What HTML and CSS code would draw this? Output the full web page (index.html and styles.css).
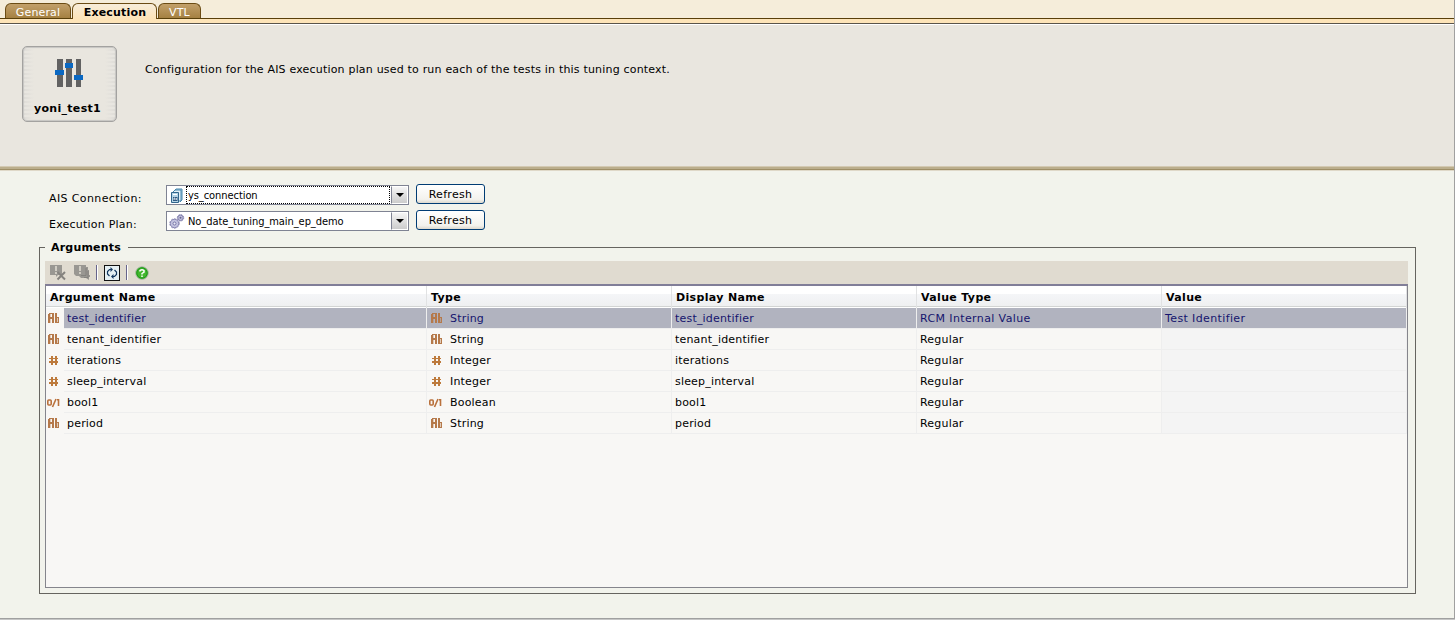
FILE: index.html
```html
<!DOCTYPE html>
<html lang="en">
<head>
<meta charset="utf-8">
<title>yoni_test1</title>
<link rel="stylesheet" href="styles.css">
</head>
<body>
<svg class="defs" width="0" height="0">
  <defs>
    <symbol id="ab" viewBox="0 0 12 11"><g shape-rendering="crispEdges" fill="#b5794a"><path d="M1 0H5V1H1ZM0 1H2V10H0ZM4 0H6V10H4ZM2 4H4V6H2ZM7 0H9V10H7ZM9 4H11V5H9ZM10 4H11V10H10ZM9 9H11V10H9Z"/><path d="M2 1H3V10H2ZM9 5H10V9H9Z" opacity=".35"/></g></symbol>
    <symbol id="num" viewBox="0 0 12 11"><path d="M3 1H5V10H3ZM7 1H9V10H7ZM1 3H10V4H1ZM1 6H10V8H1Z" shape-rendering="crispEdges" fill="#bd7a3c"/></symbol>
    <symbol id="bool" viewBox="0 0 13 11"><path d="M1.700 3H3.300Q4.200 3 4.200 4V7Q4.200 8 3.300 8H1.700Q.8 8 .8 7V4Q.8 3 1.700 3ZM5.500 10L9 2M10 2.800H11.500V9" fill="none" stroke="#b9713c" stroke-width="1.600"/></symbol>
  </defs>
</svg>
<div class="window">
  <nav class="tabs"><a class="tab general">General</a><a class="tab active">Execution</a><a class="tab vtl">VTL</a></nav>
  <div class="tab-strip"></div>
  <header class="banner">
    <div class="tile">
      <svg width="30" height="30" viewBox="0 0 30 30" shape-rendering="crispEdges"><path d="M3 1h6v28H3zM12 1h6v28h-6zM22 1h5v28h-5z" fill="#626262"/><path d="M1 12h9v5H1zM11 5h8v5h-8zM20 17h9v5h-9z" fill="#0a68c2"/></svg>
      <b>yoni_test1</b>
    </div>
    <p>Configuration for the AIS execution plan used to run each of the tests in this tuning context.</p>
  </header>
  <div class="divider"></div>
  <main>
    <div class="field">
      <label>AIS Connection:</label>
      <div class="combo">
        <svg width="16" height="16" viewBox="0 0 16 16"><path d="M5 3L7 1H13V12L11 14" fill="#c3dcea" stroke="#4787ad"/><path d="M4 4L6 2H12V13H10" fill="#e3f1f7" stroke="#4787ad"/><path d="M2.500 4.500H9.500V14.500H2.500Z" fill="#b5d5e7" stroke="#31668c"/><path d="M4 6.500H8" stroke="#fff"/><path d="M4 9H8.500V13H4Z" fill="#315a82"/><path d="M5 12V10H6V12M7.500 10V12" fill="none" stroke="#fff" stroke-width=".7"/></svg>
        <span class="value focused">ys_connection</span><span class="arrow"></span>
      </div>
      <button>Refresh</button>
    </div>
    <div class="field">
      <label class="plan">Execution Plan:</label>
      <div class="combo">
        <svg width="16" height="16" viewBox="0 0 16 16"><circle cx="5.500" cy="9.500" r="4.200" fill="#c3c3e0" stroke="#8b89b5" stroke-width="1"/><circle cx="5.500" cy="9.500" r="4.700" fill="none" stroke="#8b89b5" stroke-width="1" stroke-dasharray="1.800 1.200"/><circle cx="5.500" cy="9.500" r="1.500" fill="#ececf7" stroke="#7776a5"/><circle cx="11.500" cy="3.800" r="2.700" fill="#c3c2df" stroke="#8280ad"/><circle cx="11.500" cy="3.800" r="3.200" fill="none" stroke="#8280ad" stroke-dasharray="1.500 1"/><circle cx="11.500" cy="3.800" r="1" fill="#66648f"/></svg>
        <span class="value">No_date_tuning_main_ep_demo</span><span class="arrow"></span>
      </div>
      <button>Refresh</button>
    </div>
    <section class="group">
      <h2>Arguments</h2>
      <div class="toolbar">
        <svg width="18" height="18" viewBox="0 0 18 18"><path d="M1 1H13V11H9L7 13V11H1Z" fill="#999792"/><path d="M7 2V7M7 8V10" stroke="#dedad0" stroke-width="1.600"/><path d="M8.500 8L16 15.500M16 8L8.500 15.500" stroke="#85837f" stroke-width="2"/></svg>
        <svg class="second" width="18" height="18" viewBox="0 0 18 18"><path d="M1 1H13V3H15V6H16V11H17V13H16V16L13 14H8L6 12H3L1 10Z" fill="#999792"/><path d="M7 2V7M7 8V10" stroke="#dedad0" stroke-width="1.600"/><path d="M13 4V11.500H8M15 7V13.500H11" fill="none" stroke="#7e7c79" stroke-width=".8"/></svg>
        <span class="sep"></span>
        <svg class="reload" width="16" height="16" viewBox="0 0 16 16"><rect x=".5" y=".5" width="15" height="15" fill="#e5f0f4" stroke="#111"/><path d="M7 4.500H5.500L3.500 6.500V9L5.500 11M9 11.500H10.500L12.500 9.500V7L10.500 5" fill="none" stroke="#12365e" stroke-width="1.200"/><path d="M6.500 2L9 4.500L6.500 7ZM9.500 9L7 11.500L9.500 14Z" fill="#12365e"/></svg>
        <span class="sep"></span>
        <svg class="help" width="14" height="14" viewBox="0 0 14 14"><circle cx="7" cy="7" r="6.300" fill="#42b72d" stroke="#b0b6ac"/><circle cx="7" cy="7" r="5.200" fill="none" stroke="#209a1b"/><path d="M5 5.500V4.500Q7 3 9 4.500V6L7 7.500V8.500M7 9.500V11" fill="none" stroke="#fff" stroke-width="1.500"/></svg>
      </div>
      <div class="table">
        <div class="row head"><b>Argument Name</b><b>Type</b><b>Display Name</b><b>Value Type</b><b>Value</b></div>
        <div class="row selected"><span class="icon"><svg width="12" height="11"><use href="#ab"/></svg></span><span>test_identifier</span><span><svg width="12" height="11"><use href="#ab"/></svg>String</span><span>test_identifier</span><span class="loose">RCM Internal Value</span><span class="loose">Test Identifier</span></div>
        <div class="row"><span class="icon"><svg width="12" height="11"><use href="#ab"/></svg></span><span>tenant_identifier</span><span><svg width="12" height="11"><use href="#ab"/></svg>String</span><span>tenant_identifier</span><span>Regular</span><span></span></div>
        <div class="row"><span class="icon"><svg width="12" height="11"><use href="#num"/></svg></span><span>iterations</span><span><svg width="12" height="11"><use href="#num"/></svg>Integer</span><span>iterations</span><span>Regular</span><span></span></div>
        <div class="row"><span class="icon"><svg width="12" height="11"><use href="#num"/></svg></span><span>sleep_interval</span><span><svg width="12" height="11"><use href="#num"/></svg>Integer</span><span>sleep_interval</span><span>Regular</span><span></span></div>
        <div class="row"><span class="icon"><svg class="wide" width="13" height="11"><use href="#bool"/></svg></span><span>bool1</span><span><svg class="wide" width="13" height="11"><use href="#bool"/></svg>Boolean</span><span>bool1</span><span>Regular</span><span></span></div>
        <div class="row"><span class="icon"><svg width="12" height="11"><use href="#ab"/></svg></span><span>period</span><span><svg width="12" height="11"><use href="#ab"/></svg>String</span><span>period</span><span>Regular</span><span></span></div>
      </div>
    </section>
  </main>
</div>
</body>
</html>
```
FILE: styles.css
```css
* { box-sizing: border-box; }
body { margin: 0; background: #c6c6c6; font: 11px/14px "DejaVu Sans", Verdana, sans-serif; color: #000; overflow: hidden; }
svg { display: block; flex: none; }
.defs { position: absolute; }
.window { width: 1455px; height: 619px; display: flex; flex-direction: column; border-right: 1px solid #a0a0a0; border-bottom: 1px solid #a0a0a0; background: #f2f3ec; }
.tabs { height: 19px; flex: none; display: flex; align-items: flex-end; padding-left: 5px; background: #f5edda; border-bottom: 1px solid #59400b; }
.tab { height: 15px; border: 1px solid #6b4c14; border-bottom: 0; border-radius: 6px 6px 0 0; background: linear-gradient(#c2a06a, #a58142); color: #fff; text-align: center; line-height: 17px; letter-spacing: .15px; }
.general { width: 66px; }
.active { width: 85px; height: 16px; margin-bottom: -1px; margin-left: 1px; padding-left: 1px; background: linear-gradient(#f7edda, #fde4b8); color: #000; font-weight: bold; letter-spacing: .2px; }
.vtl { width: 43px; margin-left: 1px; }
.tab-strip { height: 6px; flex: none; background: #fde4b8; border-bottom: 1px solid #fff; box-shadow: inset 0 -1px #59544a; }
.banner { height: 141px; flex: none; display: flex; padding: 21px 0 0 22px; background: #e9e6df; }
.divider { height: 5px; flex: none; background: linear-gradient(#d3c9b2 0 1px, #bbae8c 1px 3px, #9f8f67 3px 4px, #dfd8c8 4px); }
.tile { width: 95px; height: 76px; border: 1px solid #a3a2a0; border-radius: 5px; box-shadow: inset 0 0 1px 1px #c6c5c2; background: linear-gradient(90deg, transparent, #e9e6df 12%, #e9e6df 88%, transparent), repeating-linear-gradient(#e8e6e1 0 2px, #dedcd8 2px 4px); display: flex; flex-direction: column; align-items: center; padding-top: 11px; }
.tile svg { margin-right: 2px; }
.tile b { margin-top: 14px; margin-right: 4px; letter-spacing: .3px; }
.banner p { margin: 17px 0 0 28px; letter-spacing: .19px; }
main { display: flex; flex-direction: column; padding: 14px 0 0 39px; }
.field { display: flex; height: 26px; }
.field label { width: 127px; padding: 7px 0 0 10px; letter-spacing: .38px; }
.field .plan { letter-spacing: .22px; }
.combo { width: 243px; height: 20px; border: 1px solid #7f8393; display: flex; background: #fff; padding-left: 2px; }
.combo svg { margin-top: 2px; }
.value { width: 206px; height: 18px; margin-left: 1px; padding: 3px 0 0 2px; line-height: 13px; font-family: "DejaVu Sans Condensed", Tahoma, sans-serif; letter-spacing: -.07px; }
.focused { width: 205px; margin-right: 1px; outline: 1px dotted #000; outline-offset: -1px; }
.arrow { width: 17px; border: 1px solid #fff; border-left: 1px solid #7f8393; background: linear-gradient(#f5f5f5, #ccc); display: flex; align-items: center; justify-content: center; }
.arrow::after { content: ""; border: 4px solid transparent; border-top-color: #000; border-bottom: 0; }
button { width: 69px; height: 20px; margin: -1px 0 0 7px; padding: 1px 0 0; border: 1px solid #003c74; border-radius: 3px; background: linear-gradient(#fff, #f3f2ed 80%, #ddd9ce); font: inherit; letter-spacing: .3px; color: #000; }
.group { width: 1377px; height: 347px; margin-top: 10px; padding: 0 7px 0 5px; border: 1px solid #66645f; display: flex; flex-direction: column; }
h2 { width: 83px; height: 14px; margin: -7px 0 0; padding-left: 6px; background: #f2f3ec; font-size: 11px; line-height: 14px; letter-spacing: .2px; }
.toolbar { height: 23px; margin-top: 6px; display: flex; align-items: center; padding-left: 4px; background: #e0dbd0; }
.second { margin-left: 6px; }
.sep { width: 1px; height: 15px; background: #66648b; margin-left: 5px; box-shadow: 1px 0 #fff; }
.reload { margin-left: 7px; }
.sep + .help { margin-left: 8px; }
.sep:nth-of-type(2) { margin-left: 6px; }
.table { height: 304px; background: #f8f7f5; border: 1px solid #85858c; border-top: 2px solid #817e98; }
.row { display: grid; grid-template: 21px / 18px 363px 245px 245px 245px 245px; height: 21px; line-height: 19px; letter-spacing: .19px; }
.row span { display: flex; align-items: center; border-right: 1px solid #eee; border-bottom: 1px solid #eee; padding: 1px 0 0 3px; white-space: nowrap; }
.row svg { margin-top: -1px; }
.row .icon svg { margin-top: -2px; }
.row span:nth-child(3) svg { margin-left: 1px; margin-right: 7px; }
.row .wide, .row span:nth-child(3) .wide { margin-left: -1px; margin-right: 8px; }
.row .icon { padding-left: 2px; border: 0; }
.row span:last-child { background: #f4f4f4; }
.row .loose { letter-spacing: .38px; }
.head { grid-template: 22px / 381px 245px 245px 245px 245px; height: 22px; background: linear-gradient(#fff 0 8px, #f5f6f8 8px, #eff0f1 20px, #d2d4d3 20px 21px, #fff 21px); letter-spacing: .35px; }
.head b { padding-left: 4px; line-height: 23px; height: 22px; border-right: 1px solid #e1e2e3; }
.row.selected span:not(.icon) { background: #b1b3bf; color: #15156e; }
```
